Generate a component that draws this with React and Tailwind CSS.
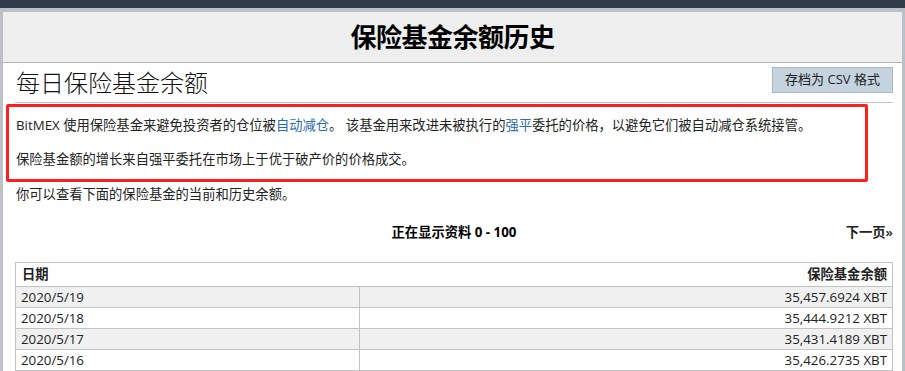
import React from 'react'

const rows = [
  { date: '2020/5/19', amount: '35,457.6924 XBT' },
  { date: '2020/5/18', amount: '35,444.9212 XBT' },
  { date: '2020/5/17', amount: '35,431.4189 XBT' },
  { date: '2020/5/16', amount: '35,426.2735 XBT' },
]

const font = { fontFamily: '"Open Sans", "Noto Sans CJK SC", sans-serif' }

export default function App() {
  return (
    <div className="w-[905px] h-[371px] overflow-hidden bg-[#2f3d4a] pt-[8px] text-[#222]" style={font}>
      <div className="h-full bg-[#bcc1c6] px-[3px] pt-[4px]">
        <div className="h-full bg-white">
          {/* Header */}
          <div className="h-[51px] bg-[#eeeeee] border-b border-[#b5b5b5] flex items-center justify-center">
            <h1 className="text-[26px] font-bold text-black tracking-[-0.5px]">保险基金余额历史</h1>
          </div>

          <div className="pl-[12px] pr-[9px]">
            <div className="flex items-center justify-between h-[40px] border-b border-[#c4c4c4]">
              <h2 className="text-[24px] font-light text-[#111] pl-[1px] leading-none">每日保险基金余额</h2>
              <button className="h-[26px] w-[121px] bg-[#c5d3df] border border-[#a9b6c2] text-[13px] text-[#222] mt-[-6px]">
                存档为 CSV 格式
              </button>
            </div>

            <div className="relative text-[13.3px] leading-[20px] pl-[1px]">
              <div className="absolute left-[-9px] top-[1px] w-[862px] h-[78px] border-[3px] border-[#ff1f1f] rounded-[2px]"></div>
              <p className="pt-[12px]">
                BitMEX 使用保险基金来避免投资者的仓位被<span className="text-[#2a6db0]">自动减仓</span>。 该基金用来改进未被执行的<span className="text-[#2a6db0]">强平</span>委托的价格，以避免它们被自动减仓系统接管。
              </p>
              <p className="pt-[14px]">保险基金额的增长来自强平委托在市场上于优于破产价的价格成交。</p>
              <p className="pt-[15px]">你可以查看下面的保险基金的当前和历史余额。</p>
            </div>

            <div className="flex items-center mt-[19px] h-[20px] text-[13.3px] font-bold">
              <div className="flex-1"></div>
              <div className="text-black">正在显示资料 0 - 100</div>
              <div className="flex-1 text-right font-semibold">下一页»</div>
            </div>

            <table className="mt-[19px] w-[878px] border-collapse text-[13.3px]">
              <thead>
                <tr className="h-[24px] bg-white border border-[#c2c2c2]">
                  <th className="text-left font-bold px-[6px] w-[344px]">日期</th>
                  <th className="text-right font-bold px-[5px]">保险基金余额</th>
                </tr>
              </thead>
              <tbody>
                {rows.map((r, i) => (
                  <tr key={r.date} className={i % 2 === 0 ? 'h-[21px] bg-[#f0f0f0]' : 'h-[21px] bg-white'}>
                    <td className="border border-[#c2c2c2] px-[5px] py-0 leading-[20px]">{r.date}</td>
                    <td className="border border-[#c2c2c2] px-[5px] py-0 leading-[20px] text-right">{r.amount}</td>
                  </tr>
                ))}
              </tbody>
            </table>
          </div>
        </div>
      </div>
    </div>
  )
}
